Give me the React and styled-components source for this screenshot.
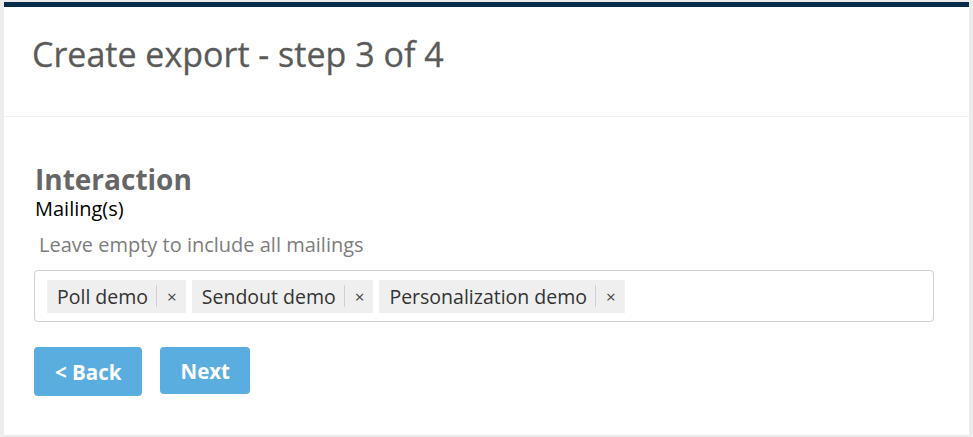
import styled, { createGlobalStyle } from 'styled-components';

const GlobalStyle = createGlobalStyle`
  html, body {
    margin: 0;
    padding: 0;
    background: #ececec;
    font-family: "Open Sans", "Liberation Sans", sans-serif;
  }
`;

const mailings = ['Poll demo', 'Sendout demo', 'Personalization demo'];

const Page = styled.div`
  padding: 2px 4px 0 4px;
  width: 965px;
`;

const Panel = styled.div`
  background: #fff;
  border-top: 5px solid #062a4a;
  height: 433px;
  box-sizing: border-box;
`;

const Header = styled.div`
  height: 110px;
  box-sizing: border-box;
  padding: 27px 28px 0;
  border-bottom: 1px solid #f0f0f0;

  h1 {
    margin: 0;
    font-size: 34px;
    font-weight: 400;
    color: #5a5a5a;
    line-height: 40px;
    -webkit-text-stroke: 0.3px #5a5a5a;
  }
`;

const Body = styled.div`
  padding: 45px 35px 0 30px;
`;

const SectionTitle = styled.h2`
  margin: 0 0 0 1px;
  font-size: 28px;
  font-weight: 700;
  color: #666;
  line-height: 34px;
`;

const Label = styled.div`
  font-size: 20px;
  color: #000;
  line-height: 24px;
  margin: 1px 0 0 1px;
`;

const Hint = styled.div`
  font-size: 20px;
  color: #7d7d7d;
  line-height: 24px;
  margin: 12px 0 13px 5px;
`;

const TagInput = styled.div`
  display: flex;
  gap: 6px;
  align-items: center;
  height: 52px;
  box-sizing: border-box;
  border: 1px solid #cfcfcf;
  border-radius: 4px;
  padding: 0 12px;
`;

const Tag = styled.div`
  display: flex;
  align-items: center;
  height: 33px;
  background: #efefef;
  font-size: 19.5px;
  color: #333;
  padding: 0 0 0 10px;
`;

const TagRemove = styled.span`
  display: flex;
  align-items: center;
  height: 22px;
  margin-left: 8px;
  padding: 0 9px 0 10px;
  border-left: 1px solid #d0d0d0;
  font-size: 17px;
  color: #444;
`;

const Actions = styled.div`
  display: flex;
  gap: 18px;
  margin-top: 25px;
`;

const Button = styled.button`
  font-family: inherit;
  font-size: 20.5px;
  font-weight: 700;
  color: #fff;
  background: #5aaddf;
  border: none;
  border-radius: 4px;
  height: ${(p) => p.$height}px;
  padding: 0 ${(p) => p.$pad}px;
`;

export default function App() {
  return (
    <>
      <GlobalStyle />
      <Page>
        <Panel>
          <Header>
            <h1>Create export - step 3 of 4</h1>
          </Header>
          <Body>
            <SectionTitle>Interaction</SectionTitle>
            <Label>Mailing(s)</Label>
            <Hint>Leave empty to include all mailings</Hint>
            <TagInput>
              {mailings.map((m) => (
                <Tag key={m}>
                  {m}
                  <TagRemove>×</TagRemove>
                </Tag>
              ))}
            </TagInput>
            <Actions>
              <Button $height={49} $pad={21}>&lt; Back</Button>
              <Button $height={47} $pad={20}>Next</Button>
            </Actions>
          </Body>
        </Panel>
      </Page>
    </>
  );
}
